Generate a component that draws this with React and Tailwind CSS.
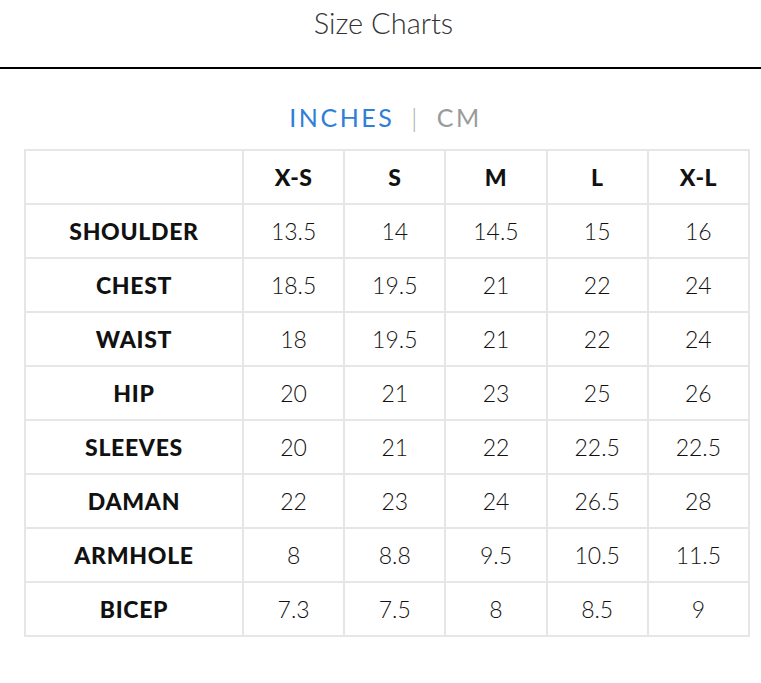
const sizes = ['X-S', 'S', 'M', 'L', 'X-L'];

const rows = [
  ['SHOULDER', '13.5', '14', '14.5', '15', '16'],
  ['CHEST', '18.5', '19.5', '21', '22', '24'],
  ['WAIST', '18', '19.5', '21', '22', '24'],
  ['HIP', '20', '21', '23', '25', '26'],
  ['SLEEVES', '20', '21', '22', '22.5', '22.5'],
  ['DAMAN', '22', '23', '24', '26.5', '28'],
  ['ARMHOLE', '8', '8.8', '9.5', '10.5', '11.5'],
  ['BICEP', '7.3', '7.5', '8', '8.5', '9'],
];

export default function App() {
  return (
    <div className="w-[761px] h-[683px] bg-white font-['Lato',sans-serif] text-[#111]">
      <div className="h-[67px] pt-[1px] pl-[6px] text-center text-[29px] font-light text-[#333]">Size Charts</div>
      <div className="h-[2px] bg-black" />

      {/* unit toggle */}
      <div className="flex items-center justify-center gap-[17px] pl-[10px] pt-[31px] pb-[15px] text-[25px] tracking-[0.1em] leading-[34px]">
        <span className="text-[#2f7ed8]">INCHES</span>
        <span className="text-[#aaa] font-light">|</span>
        <span className="text-[#9a9a9a]">CM</span>
      </div>

      <div className="px-[24px]">
        <table className="w-[726px] border-collapse border-2 border-[#e6e6e6] table-fixed">
          <colgroup>
            <col className="w-[218px]" />
            {sizes.map((s) => (
              <col key={s} />
            ))}
          </colgroup>
          <thead>
            <tr className="h-[54px]">
              <th className="border-2 border-[#e6e6e6]" />
              {sizes.map((s) => (
                <th key={s} className="border-2 border-[#e6e6e6] text-[23px] font-black tracking-[0.02em]">
                  {s}
                </th>
              ))}
            </tr>
          </thead>
          <tbody>
            {rows.map((r) => (
              <tr key={r[0]} className="h-[54px]">
                <td className="border-2 border-[#e6e6e6] text-center text-[23px] font-black tracking-[0.03em]">
                  {r[0]}
                </td>
                {r.slice(1).map((v, i) => (
                  <td key={i} className="border-2 border-[#e6e6e6] text-center text-[23px] font-light">
                    {v}
                  </td>
                ))}
              </tr>
            ))}
          </tbody>
        </table>
      </div>
    </div>
  );
}
